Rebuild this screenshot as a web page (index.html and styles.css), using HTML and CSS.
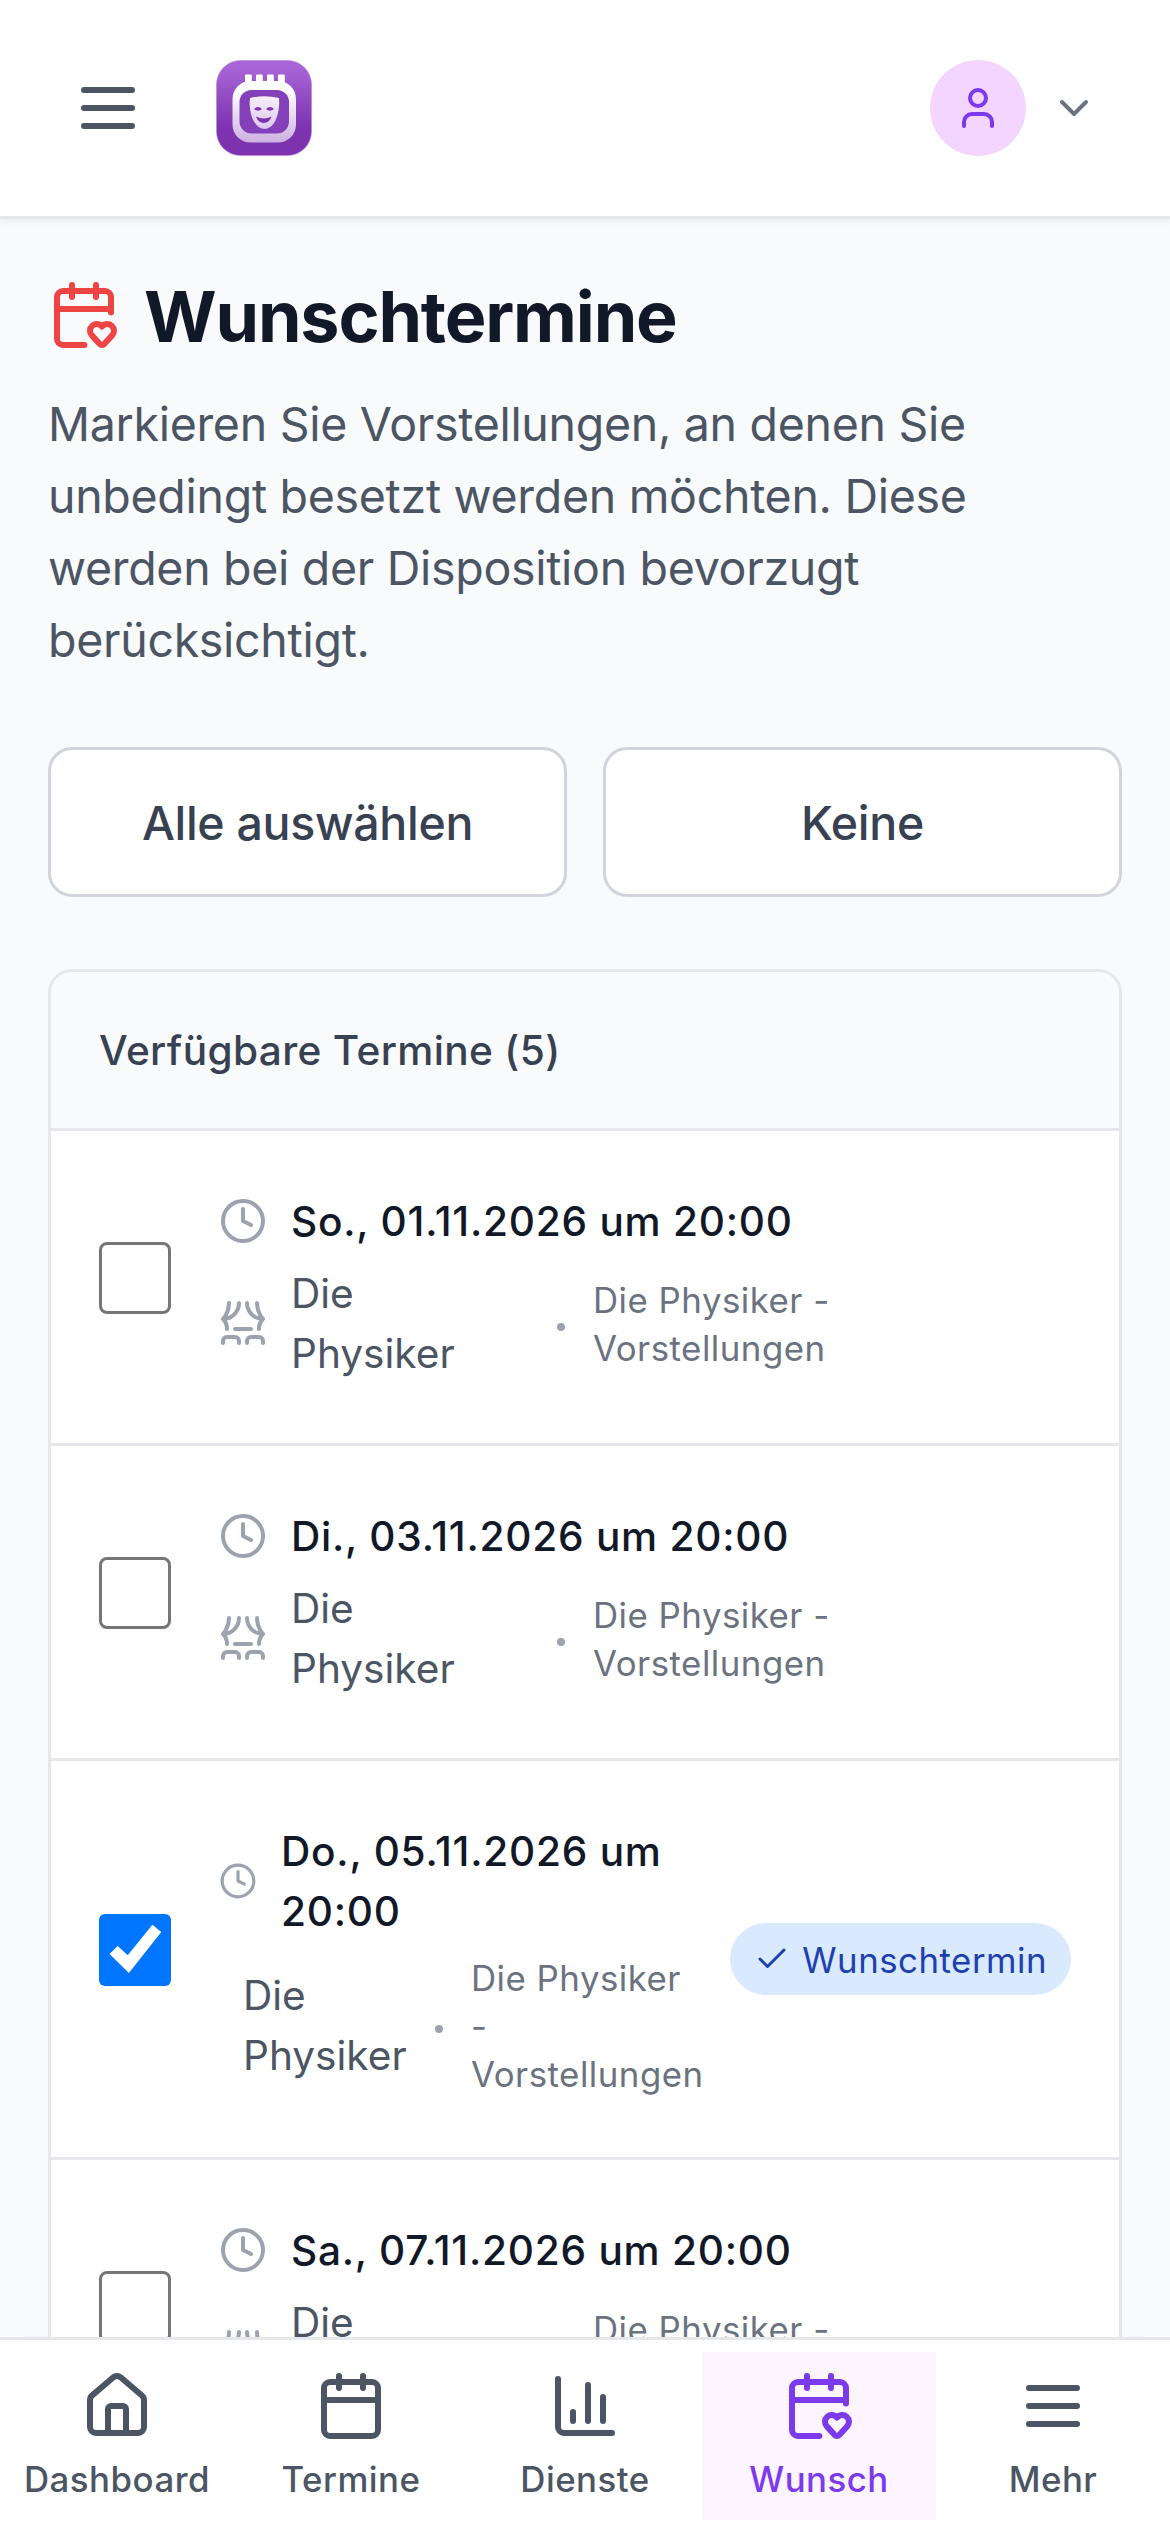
FILE: index.html
```html
<!DOCTYPE html>
<html lang="de">
<head>
    <meta charset="UTF-8">
    <meta name="viewport" content="width=device-width, initial-scale=1.0">
    <title>Wunschtermine</title>
    <link rel="stylesheet" href="styles.css">
</head>
<body>

    <!-- Icon Sprites -->
    <svg class="sprites" aria-hidden="true">
        <symbol id="icon-menu" viewBox="0 0 24 24">
            <path d="M4 6h16M4 12h16M4 18h16"/>
        </symbol>
        <symbol id="icon-user" viewBox="0 0 24 24">
            <path d="M19 21v-2a4 4 0 0 0-4-4H9a4 4 0 0 0-4 4v2"/>
            <circle cx="12" cy="7" r="4"/>
        </symbol>
        <symbol id="icon-chevron" viewBox="0 0 24 24">
            <path d="m6 9 6 6 6-6"/>
        </symbol>
        <symbol id="icon-calendar" viewBox="0 0 24 24">
            <path d="M8 2v4M16 2v4M3 10h18"/>
            <rect width="18" height="18" x="3" y="4" rx="2"/>
        </symbol>
        <symbol id="icon-calendar-heart" viewBox="0 0 24 24">
            <path d="M12.127 22H5a2 2 0 0 1-2-2V6a2 2 0 0 1 2-2h14a2 2 0 0 1 2 2v5.125"/>
            <path d="M14.62 18.8A2.25 2.25 0 1 1 18 15.836a2.25 2.25 0 1 1 3.38 2.966l-2.626 2.856a.998.998 0 0 1-1.507 0z"/>
            <path d="M16 2v4M3 10h18M8 2v4"/>
        </symbol>
        <symbol id="icon-clock" viewBox="0 0 24 24">
            <circle cx="12" cy="12" r="10"/>
            <path d="M12 6v6l4 2"/>
        </symbol>
        <symbol id="icon-theater" viewBox="0 0 24 24">
            <path d="M2 10s3-3 3-8M22 10s-3-3-3-8M10 2c0 4.4-3.6 8-8 8M14 2c0 4.4 3.6 8 8 8M2 10s2 2 2 5M22 10s-2 2-2 5M8 15h8"/>
            <path d="M2 22v-1a2 2 0 0 1 2-2h4a2 2 0 0 1 2 2v1M14 22v-1a2 2 0 0 1 2-2h4a2 2 0 0 1 2 2v1"/>
        </symbol>
        <symbol id="icon-check" viewBox="0 0 24 24">
            <path d="M20 6 9 17l-5-5"/>
        </symbol>
        <symbol id="icon-house" viewBox="0 0 24 24">
            <path d="M15 21v-8a1 1 0 0 0-1-1h-4a1 1 0 0 0-1 1v8"/>
            <path d="M3 10a2 2 0 0 1 .709-1.528l7-5.999a2 2 0 0 1 2.582 0l7 5.999A2 2 0 0 1 21 10v9a2 2 0 0 1-2 2H5a2 2 0 0 1-2-2z"/>
        </symbol>
        <symbol id="icon-chart" viewBox="0 0 24 24">
            <path d="M3 3v16a2 2 0 0 0 2 2h16M18 17V9M13 17V5M8 17v-3"/>
        </symbol>
    </svg>

    <!-- Header -->
    <header class="header">
        <button class="menu-button" aria-label="Menü">
            <svg class="icon"><use href="#icon-menu"/></svg>
        </button>
        <svg class="logo" viewBox="0 0 96 96">
            <defs>
                <linearGradient id="logoBg" x1="0" y1="0" x2="0" y2="1">
                    <stop offset="0.08" stop-color="#a864d6"/>
                    <stop offset="0.7" stop-color="#7d33b0"/>
                </linearGradient>
                <linearGradient id="logoFrame" x1="0" y1="0" x2="0" y2="1">
                    <stop offset="0.15" stop-color="#ffffff"/>
                    <stop offset="1" stop-color="#ccb0e2"/>
                </linearGradient>
                <linearGradient id="logoMask" x1="0" y1="0" x2="0" y2="1">
                    <stop offset="0" stop-color="#f6effb"/>
                    <stop offset="1" stop-color="#dcc8ec"/>
                </linearGradient>
            </defs>
            <rect x="0.5" y="0.5" width="95" height="95" rx="24" fill="url(#logoBg)" stroke="#b983e0" stroke-opacity="0.6"/>
            <path d="M29 15.5a1 1 0 0 1 1-1h4.8a1 1 0 0 1 1 1V21H40v-5.5a1 1 0 0 1 1-1h4.8a1 1 0 0 1 1 1V21H51v-5.5a1 1 0 0 1 1-1h4.8a1 1 0 0 1 1 1V21H62v-5.5a1 1 0 0 1 1-1h4.8a1 1 0 0 1 1 1V24H29z" fill="#ffffff"/>
            <rect x="16.5" y="21" width="63.5" height="61.5" rx="18" fill="url(#logoFrame)"/>
            <rect x="23.5" y="30" width="49.5" height="43.5" rx="12" fill="#8440b8"/>
            <path d="M34 38q14-3.5 29 0c.8 9-1 18-4 23.500q-4.5 7.5-10.5 7.5T38 61.500C34.500 56 33 46 34 38z" fill="url(#logoMask)"/>
            <path d="M38 49q4-4 8 0-4 3.500-8 0zM50 49q4-4 8 0-4 3.500-8 0zM40 56.500q8 4 15.500 0-2 6.500-7.700 6.500T40 56.500z" fill="#7d33b0"/>
        </svg>
        <div class="account">
            <span class="avatar"><svg class="icon"><use href="#icon-user"/></svg></span>
            <svg class="icon chevron"><use href="#icon-chevron"/></svg>
        </div>
    </header>

    <!-- Content -->
    <main class="content">
        <h1><svg class="icon"><use href="#icon-calendar-heart"/></svg><span>Wunschtermine</span></h1>
        <p class="intro">Markieren Sie Vorstellungen, an denen Sie unbedingt besetzt werden möchten. Diese werden bei der Disposition bevorzugt berücksichtigt.</p>

        <div class="actions">
            <button class="btn">Alle auswählen</button>
            <button class="btn">Keine</button>
        </div>

        <section class="card">
            <h2>Verfügbare Termine (5)</h2>

            <label class="row">
                <span class="checkbox"></span>
                <div class="info">
                    <div class="date"><svg class="icon"><use href="#icon-clock"/></svg><span>So., 01.11.2026 um 20:00</span></div>
                    <div class="details">
                        <svg class="icon"><use href="#icon-theater"/></svg>
                        <span class="show">Die<br>Physiker</span>
                        <span class="dot"></span>
                        <span class="group">Die Physiker -<br>Vorstellungen</span>
                    </div>
                </div>
            </label>

            <label class="row">
                <span class="checkbox"></span>
                <div class="info">
                    <div class="date"><svg class="icon"><use href="#icon-clock"/></svg><span>Di., 03.11.2026 um 20:00</span></div>
                    <div class="details">
                        <svg class="icon"><use href="#icon-theater"/></svg>
                        <span class="show">Die<br>Physiker</span>
                        <span class="dot"></span>
                        <span class="group">Die Physiker -<br>Vorstellungen</span>
                    </div>
                </div>
            </label>

            <label class="row selected">
                <span class="checkbox checked">
                    <svg viewBox="0 0 72 72"><path d="M10.5 40l8.200-8 10 9.300L53.400 10.700l8.900 7.300L29.900 59z" fill="#fff"/></svg>
                </span>
                <div class="info">
                    <div class="date"><svg class="icon"><use href="#icon-clock"/></svg><span>Do., 05.11.2026 um<br>20:00</span></div>
                    <div class="details">
                        <span class="show">Die<br>Physiker</span>
                        <span class="dot"></span>
                        <span class="group">Die Physiker<br>-<br>Vorstellungen</span>
                    </div>
                </div>
                <span class="badge"><svg class="icon"><use href="#icon-check"/></svg><span>Wunschtermin</span></span>
            </label>

            <label class="row">
                <span class="checkbox"></span>
                <div class="info">
                    <div class="date"><svg class="icon"><use href="#icon-clock"/></svg><span>Sa., 07.11.2026 um 20:00</span></div>
                    <div class="details">
                        <svg class="icon"><use href="#icon-theater"/></svg>
                        <span class="show">Die<br>Physiker</span>
                        <span class="dot"></span>
                        <span class="group">Die Physiker -<br>Vorstellungen</span>
                    </div>
                </div>
            </label>
        </section>
    </main>

    <!-- Bottom Navigation -->
    <nav class="bottom-nav">
        <a class="nav-item"><svg class="icon"><use href="#icon-house"/></svg><span>Dashboard</span></a>
        <a class="nav-item"><svg class="icon"><use href="#icon-calendar"/></svg><span>Termine</span></a>
        <a class="nav-item"><svg class="icon"><use href="#icon-chart"/></svg><span>Dienste</span></a>
        <a class="nav-item active"><svg class="icon"><use href="#icon-calendar-heart"/></svg><span>Wunsch</span></a>
        <a class="nav-item"><svg class="icon"><use href="#icon-menu"/></svg><span>Mehr</span></a>
    </nav>

</body>
</html>
```

FILE: styles.css
```css
/* General Styling */
* {
    box-sizing: border-box;
}

body {
    font-family: Inter, 'Liberation Sans', sans-serif;
    background: #f9fafb;
    margin: 0;
    height: 100vh;
    display: flex;
    flex-direction: column;
    overflow: hidden;
}

button {
    font-family: inherit;
    cursor: pointer;
}

.sprites {
    display: none;
}

.icon {
    width: 48px;
    height: 48px;
    flex-shrink: 0;
    fill: none;
    stroke: currentColor;
    stroke-width: 2;
    stroke-linecap: round;
    stroke-linejoin: round;
}

/* Header */
.header {
    display: flex;
    align-items: center;
    height: 219px;
    flex-shrink: 0;
    padding: 0 72px 0 48px;
    background: white;
    border-bottom: 3px solid #e5e7eb;
    box-shadow: 0 3px 6px rgba(0,0,0,0.05);
}

.menu-button {
    display: flex;
    padding: 24px;
    margin-right: 48px;
    border: none;
    background: none;
    color: #4b5563;
}

.menu-button .icon {
    width: 72px;
    height: 72px;
}

.logo {
    width: 96px;
    height: 96px;
}

.account {
    display: flex;
    align-items: center;
    gap: 24px;
    margin-left: auto;
}

.avatar {
    display: flex;
    align-items: center;
    justify-content: center;
    width: 96px;
    height: 96px;
    border-radius: 50%;
    background: #f3d5ff;
    color: #7c3aed;
}

.chevron {
    color: #6b7280;
}

/* Content */
.content {
    flex: 1;
    min-height: 0;
    overflow: hidden;
    padding: 48px 48px 0;
}

h1 {
    display: flex;
    align-items: center;
    gap: 24px;
    margin: 0;
    font-size: 70px;
    line-height: 96px;
    font-weight: 700;
    letter-spacing: -1.15px;
    color: #111827;
}

h1 span {
    margin: 2px 0 -2px;
}

h1 .icon {
    width: 72px;
    height: 72px;
    color: #ef4444;
}

.intro {
    margin: 25px 0 71px;
    font-size: 46.5px;
    line-height: 72px;
    letter-spacing: -0.3px;
    color: #4b5563;
}

.actions {
    display: flex;
    gap: 36px;
    margin-bottom: 72px;
}

.btn {
    flex: 1;
    height: 150px;
    padding: 2px 0 0;
    border: 3px solid #d1d5db;
    border-radius: 24px;
    background: white;
    font-size: 46.5px;
    font-weight: 500;
    letter-spacing: -0.3px;
    color: #374151;
}

/* Card */
.card {
    border: 3px solid #e5e7eb;
    border-radius: 24px;
    background: white;
    overflow: hidden;
}

h2 {
    margin: 0;
    padding: 49px 48px 47px;
    background: #f9fafb;
    font-size: 40.6px;
    line-height: 60px;
    font-weight: 500;
    letter-spacing: 0.36px;
    color: #374151;
}

.row {
    display: flex;
    align-items: center;
    padding: 60px 48px;
    border-top: 3px solid #e5e7eb;
}

.checkbox {
    width: 72px;
    height: 72px;
    flex-shrink: 0;
    margin: 0 48px 18px 0;
    border: 3px solid #767676;
    border-radius: 8px;
}

.checkbox.checked {
    border: none;
    border-radius: 6px;
    background: #0075ff;
}

.checkbox svg {
    display: block;
}

.info {
    flex: 1;
}

.date, .details {
    display: flex;
    align-items: center;
    gap: 24px;
    font-size: 40.6px;
    line-height: 60px;
    white-space: nowrap;
}

.date {
    margin-bottom: 12px;
    font-weight: 500;
    letter-spacing: 0.77px;
    color: #111827;
}

.date span, .show, .badge span {
    margin: 1px 0 -1px;
}

.date .icon, .details .icon {
    color: #9ca3af;
}

.show {
    width: 242px;
    color: #4b5563;
}

.dot {
    width: 8px;
    height: 8px;
    margin-top: 8px;
    border-radius: 50%;
    background: #9ca3af;
}

.group {
    margin: 1px 0 -1px 4px;
    font-size: 34.8px;
    line-height: 48px;
    letter-spacing: 0.5px;
    color: #6b7280;
}

/* Selected row leaves less space for the text */
.selected .date .icon {
    width: 38px;
    height: 38px;
}

.selected .details {
    padding-left: 24px;
}

.selected .show {
    width: 168px;
}

.badge {
    display: flex;
    align-items: center;
    gap: 12px;
    height: 72px;
    padding: 0 24px;
    border-radius: 36px;
    background: #d9e9fe;
    font-size: 34.8px;
    letter-spacing: 0.5px;
    color: #1e40af;
}

.badge .icon {
    width: 36px;
    height: 36px;
}

/* Bottom Navigation */
.bottom-nav {
    display: flex;
    position: relative;
    height: 194px;
    flex-shrink: 0;
    padding: 12px 0 11px;
    border-top: 3px solid #e5e7eb;
    background: white;
    box-shadow: 0 30px 45px -9px rgba(0,0,0,0.1);
}

.nav-item {
    flex: 1;
    display: flex;
    flex-direction: column;
    align-items: center;
    gap: 13px;
    padding-top: 18px;
    font-size: 34.8px;
    line-height: 48px;
    font-weight: 500;
    letter-spacing: 0.5px;
    color: #4b5563;
}

.nav-item .icon {
    width: 72px;
    height: 72px;
}

.nav-item.active {
    background: #fcf4ff;
    color: #7c3aed;
}
```
